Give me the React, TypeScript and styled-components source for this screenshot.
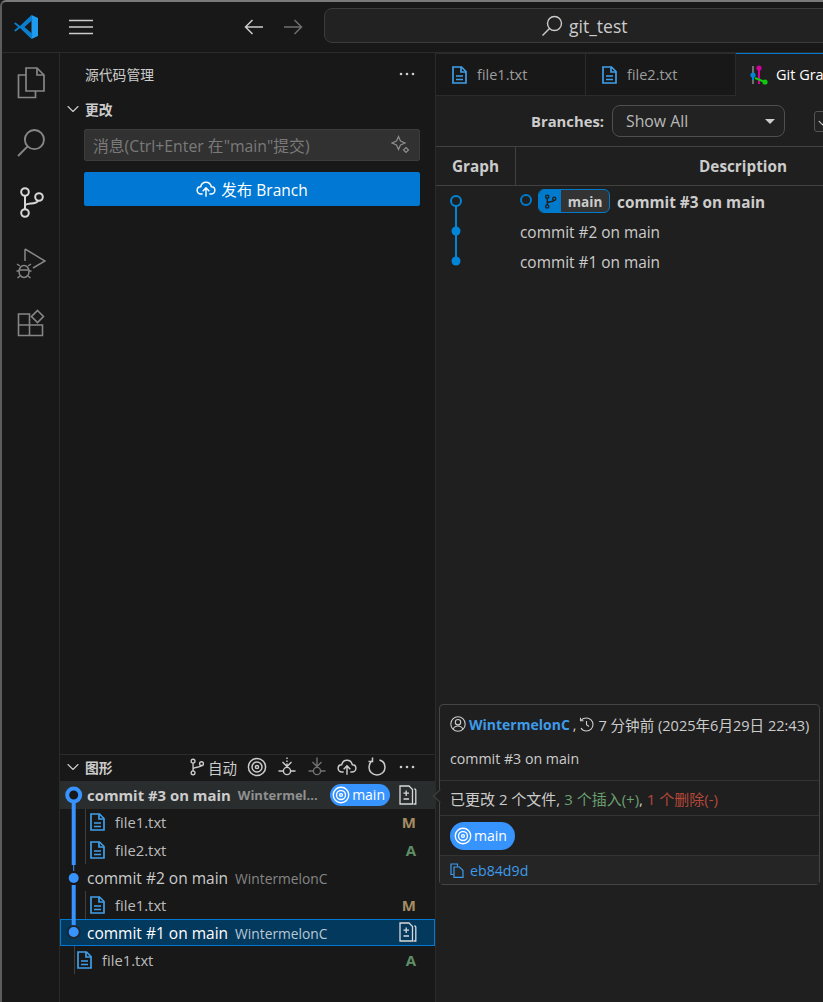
import React from 'react'
import styled, { createGlobalStyle } from 'styled-components'

const FONT = `"Open Sans", "Noto Sans CJK SC", sans-serif`

const GlobalStyle = createGlobalStyle`
  html, body {
    margin: 0;
    padding: 0;
    background: #181818;
    overflow: hidden;
  }
  * {
    box-sizing: border-box;
  }
`

const Window = styled.div`
  position: relative;
  width: 823px;
  height: 1002px;
  display: flex;
  flex-direction: column;
  overflow: hidden;
  background: #181818;
  border-top: 2px solid #7a7a7a;
  border-left: 2px solid #5c5c5c;
  border-top-left-radius: 6px;
  font-family: ${FONT};
  font-size: 14px;
  color: #cccccc;
`

const TitleBar = styled.header`
  height: 51px;
  flex: none;
  display: flex;
  align-items: center;
  border-bottom: 1px solid #2b2b2b;
`

const LogoSlot = styled.div`
  width: 48px;
  flex: none;
  display: flex;
  justify-content: center;
`

const MenuButton = styled.div`
  width: 42px;
  flex: none;
  margin-left: 10px;
  display: flex;
  justify-content: center;
  color: #cccccc;
`

const NavButtons = styled.div`
  flex: none;
  margin-left: 142px;
  margin-right: 21px;
  display: flex;
  gap: 19px;
`

const NavArrow = styled.span<{ $dim?: boolean }>`
  display: flex;
  color: ${({ $dim }) => ($dim ? '#6e6e6e' : '#cccccc')};
`

const SearchBox = styled.div`
  width: 640px;
  height: 35px;
  flex: none;
  align-self: flex-start;
  margin-top: 6px;
  display: flex;
  align-items: center;
  padding-left: 216px;
  gap: 6px;
  background: #222222;
  border: 1px solid #3c3c3c;
  border-radius: 8px 0 0 8px;
  font-size: 17.5px;
  color: #cccccc;
`

const Body = styled.div`
  flex: 1;
  display: flex;
  min-height: 0;
`

const ActivityBar = styled.nav`
  width: 58px;
  flex: none;
  display: flex;
  flex-direction: column;
  align-items: center;
  gap: 28px;
  padding: 14px 0 0;
  border-right: 1px solid #2b2b2b;
`

const ActivityIcon = styled.div<{ $active?: boolean }>`
  width: 32px;
  height: 32px;
  display: flex;
  align-items: center;
  justify-content: center;
  color: ${({ $active }) => ($active ? '#d7d7d7' : '#868686')};
`

const SideBar = styled.aside`
  width: 376px;
  flex: none;
  display: flex;
  flex-direction: column;
  border-right: 1px solid #2b2b2b;
`

const SideTitle = styled.div`
  height: 45px;
  flex: none;
  display: flex;
  align-items: center;
  justify-content: space-between;
  padding: 0 20px 4px 25px;
  font-size: 13.8px;
  color: #cccccc;
`

const Dots = styled.span`
  display: flex;
  color: #cccccc;
`

const SectionHead = styled.div`
  height: 24px;
  flex: none;
  display: flex;
  align-items: center;
  gap: 4px;
  padding: 0 0 2px 5px;
  font-size: 13.8px;
  font-weight: 700;
  color: #cccccc;
`

const CommitInput = styled.div`
  height: 32px;
  margin: 7px 15px 0 24px;
  flex: none;
  display: flex;
  align-items: center;
  justify-content: space-between;
  padding: 0 8px;
  background: #313131;
  border: 1px solid #3c3c3c;
  border-radius: 2px;
  font-size: 15.8px;
  color: #7a7a7a;
  white-space: nowrap;
`

const PublishButton = styled.div`
  height: 34px;
  margin: 11px 15px 0 24px;
  flex: none;
  display: flex;
  align-items: center;
  justify-content: center;
  gap: 5px;
  background: #0078d4;
  border-radius: 2px;
  font-size: 15.5px;
  color: #ffffff;
`

const Spacer = styled.div`
  flex: 1;
`

const GraphPane = styled.section`
  flex: none;
  height: 248px;
  border-top: 1px solid #2b2b2b;
  display: flex;
  flex-direction: column;
`

const GraphHead = styled.div`
  height: 26px;
  flex: none;
  display: flex;
  align-items: center;
  padding: 0 18px 2px 5px;
  font-size: 13.8px;
  font-weight: 700;
`

const GraphHeadTitle = styled.span`
  display: flex;
  align-items: center;
  gap: 4px;
  flex: 1;
`

const GraphTools = styled.div`
  display: flex;
  align-items: center;
  gap: 10px;
  font-weight: 400;
`

const AutoLabel = styled.span`
  display: flex;
  align-items: center;
  gap: 2px;
  font-size: 14.5px;
`

const ToolIcon = styled.span<{ $dim?: boolean }>`
  width: 20px;
  display: flex;
  justify-content: center;
  color: ${({ $dim }) => ($dim ? '#727272' : '#cccccc')};
`

const Tree = styled.div`
  position: relative;
`

const GraphOverlay = styled.svg`
  position: absolute;
  left: 0;
  top: 0;
  pointer-events: none;
`

const CommitRow = styled.div<{ $hover?: boolean; $selected?: boolean }>`
  height: 27.5px;
  display: flex;
  align-items: center;
  padding: 0 18px 0 27px;
  white-space: nowrap;
  background: ${({ $hover, $selected }) =>
    $selected ? '#04395e' : $hover ? '#2a2d2e' : 'transparent'};
  outline: ${({ $selected }) => ($selected ? '1px solid #0078d4' : 'none')};
  outline-offset: -1px;
  color: ${({ $selected }) => ($selected ? '#ffffff' : '#cccccc')};
`

const CommitTitle = styled.span<{ $bold?: boolean }>`
  padding-top: ${({ $bold }) => ($bold ? 0 : 2)}px;
  font-size: ${({ $bold }) => ($bold ? 14.9 : 15.5)}px;
  font-weight: ${({ $bold }) => ($bold ? 700 : 400)};
`

const CommitAuthor = styled.span<{ $selected?: boolean; $bold?: boolean }>`
  margin-left: 7px;
  padding-top: ${({ $bold }) => ($bold ? 0 : 2)}px;
  font-size: ${({ $bold }) => ($bold ? 13 : 13.8)}px;
  font-weight: ${({ $bold }) => ($bold ? 700 : 400)};
  color: ${({ $selected, $bold }) =>
    $selected ? '#b9c8d4' : $bold ? '#909090' : '#858585'};
`

const RowEnd = styled.span`
  margin-left: auto;
  display: flex;
  align-items: center;
  gap: 9px;
  color: #d8d8d8;
`

const RefPill = styled.span<{ $big?: boolean }>`
  display: inline-flex;
  align-items: center;
  gap: 2px;
  height: ${({ $big }) => ($big ? 28 : 22)}px;
  padding: ${({ $big }) => ($big ? '0 8px 0 4px' : '0 5px 0 2px')};
  border-radius: 14px;
  background: #3794ff;
  color: #ffffff;
  font-size: 14px;
`

const FileRow = styled.div<{ $root?: boolean }>`
  height: 27.5px;
  display: flex;
  align-items: center;
  margin-left: ${({ $root }) => ($root ? 14 : 25)}px;
  padding: 0 19px 0 ${({ $root }) => ($root ? 2 : 4)}px;
  border-left: 1px solid #3f3f3f;
  gap: 10px;
  font-size: 14.8px;
  color: #bcbcbc;
`

const FileStatus = styled.span<{ $added?: boolean }>`
  margin-left: auto;
  font-size: 15px;
  font-weight: 700;
  color: ${({ $added }) => ($added ? '#5f8f67' : '#a58c63')};
`

const Editor = styled.main`
  flex: 1;
  min-width: 0;
  display: flex;
  flex-direction: column;
  overflow: hidden;
  background: #1f1f1f;
`

const TabStrip = styled.div`
  height: 43px;
  flex: none;
  display: flex;
  background: #181818;
`

const Tab = styled.div<{ $active?: boolean }>`
  width: 150px;
  flex: none;
  display: flex;
  align-items: center;
  gap: ${({ $active }) => ($active ? 8 : 10)}px;
  padding-left: ${({ $active }) => ($active ? 14 : 16)}px;
  white-space: nowrap;
  font-size: 14.5px;
  border-right: 1px solid #2b2b2b;
  border-top: 1px solid ${({ $active }) => ($active ? '#0078d4' : '#2b2b2b')};
  border-bottom: 1px solid ${({ $active }) => ($active ? '#1f1f1f' : '#2b2b2b')};
  background: ${({ $active }) => ($active ? '#1f1f1f' : '#181818')};
  color: ${({ $active }) => ($active ? '#ffffff' : '#9d9d9d')};
`

const ControlRow = styled.div`
  height: 51px;
  flex: none;
  display: flex;
  align-items: center;
  padding-left: 95px;
  border-bottom: 1px solid #414141;
`

const ControlLabel = styled.span`
  font-size: 14.8px;
  font-weight: 700;
  color: #cccccc;
`

const BranchSelect = styled.div`
  width: 173px;
  height: 32px;
  flex: none;
  margin-left: 8px;
  display: flex;
  align-items: center;
  justify-content: space-between;
  padding: 0 9px 0 13px;
  background: #222222;
  border: 1px solid #4f4f4f;
  border-radius: 8px;
  font-size: 15.8px;
  color: #b9b9b9;
`

const Caret = styled.span`
  width: 0;
  height: 0;
  border-left: 5px solid transparent;
  border-right: 5px solid transparent;
  border-top: 5px solid #cccccc;
`

const Check = styled.span`
  width: 20px;
  height: 21px;
  flex: none;
  margin-left: 29px;
  display: flex;
  align-items: center;
  justify-content: center;
  background: #222222;
  border: 1px solid #555555;
  border-radius: 3px;
  color: #cccccc;
`

const TableHead = styled.div`
  height: 39px;
  flex: none;
  width: 600px;
  display: grid;
  grid-template-columns: 80px 454px;
  border-bottom: 1px solid #414141;
`

const HeadCell = styled.div<{ $first?: boolean }>`
  display: flex;
  align-items: center;
  justify-content: center;
  font-size: 15.3px;
  font-weight: 700;
  color: #cccccc;
  border-right: ${({ $first }) => ($first ? '1px solid #414141' : 'none')};
`

const TableBody = styled.div`
  display: flex;
`

const GraphColumn = styled.div`
  width: 84px;
  flex: none;
`

const RowList = styled.div`
  display: flex;
  flex-direction: column;
`

const TableRow = styled.div<{ $bold?: boolean }>`
  height: 30px;
  display: flex;
  align-items: center;
  padding-top: 2px;
  white-space: nowrap;
  font-size: ${({ $bold }) => ($bold ? 15.35 : 15.4)}px;
  font-weight: ${({ $bold }) => ($bold ? 700 : 400)};
  color: #cccccc;
`

const HeadMark = styled.span`
  width: 12px;
  height: 12px;
  margin: -4px 6px 0 0;
  flex: none;
  border: 2px solid #007acc;
  border-radius: 50%;
`

const RefChip = styled.span`
  height: 24px;
  width: 72px;
  margin: -2px 7px 0 0;
  flex: none;
  display: flex;
  overflow: hidden;
  border: 1px solid #007acc;
  border-radius: 6px;
  background: #333333;
`

const RefChipIcon = styled.span`
  width: 22px;
  display: flex;
  align-items: center;
  justify-content: center;
  background: #007acc;
  color: #1f1f1f;
`

const RefChipName = styled.span`
  flex: 1;
  display: flex;
  align-items: center;
  justify-content: center;
  font-size: 13.6px;
  font-weight: 700;
`

const Popover = styled.div`
  position: absolute;
  left: 437px;
  top: 702px;
  width: 381px;
  display: flex;
  flex-direction: column;
  background: #1f1f1f;
  border: 1px solid #454545;
  border-radius: 4px;
  font-size: 14.2px;
  color: #cccccc;
  white-space: nowrap;

  &::before {
    content: '';
    position: absolute;
    left: -5px;
    top: 86px;
    width: 9px;
    height: 9px;
    background: #1f1f1f;
    border-left: 1px solid #454545;
    border-bottom: 1px solid #454545;
    transform: rotate(45deg);
  }
`

const PopSection = styled.div<{ $height: number; $shaded?: boolean }>`
  height: ${({ $height }) => $height}px;
  padding: 0 10px;
  display: flex;
  align-items: center;
  border-top: 1px solid #333333;
  background: ${({ $shaded }) => ($shaded ? '#252526' : 'transparent')};
`

const PopHeader = styled.div`
  height: 75px;
  padding: 0 10px;
`

const PopMeta = styled.div`
  height: 38px;
  display: flex;
  align-items: center;
  gap: 3px;

  svg {
    flex: none;
  }
`

const PopDate = styled.span`
  flex: none;
  margin-left: 1px;
  font-size: 14.55px;
`

const HistorySlot = styled.span`
  flex: none;
  display: flex;
`

const PopMessage = styled.div`
  margin-top: 6px;
  line-height: 20px;
`

const PopStats = styled.span`
  font-size: 15px;
`

const PopLink = styled.span`
  color: #3d9be9;
`

const AuthorLink = styled(PopLink)`
  flex: none;
  font-size: 14px;
  font-weight: 700;
`

const Added = styled.span`
  color: #6a9f6f;
`

const Removed = styled.span`
  color: #b5483a;
`

const HashLink = styled(PopLink)`
  display: flex;
  align-items: center;
  gap: 6px;
`

type IconProps = { size?: number; stroke?: number; children: React.ReactNode }

const Glyph = ({ size = 16, stroke = 1.2, children }: IconProps) => (
  <svg
    width={size}
    height={size}
    viewBox="0 0 16 16"
    fill="none"
    stroke="currentColor"
    strokeWidth={stroke}
    strokeLinecap="round"
    strokeLinejoin="round"
  >
    {children}
  </svg>
)

const VsCodeLogo = () => (
  <svg width="26" height="26" viewBox="0 0 26 26">
    <path d="M18.5 1 L25 4 V22 L18.5 25 V1Z" fill="#1f9cf0" />
    <path d="M18.5 1 L7 12 L2.6 8.4 L1 9.4 L5.2 13 L1 16.6 L2.6 17.6 L7 14 L18.5 25 L19.5 20 L11.5 13 L19.5 6Z" fill="#0a7fd0" />
  </svg>
)

const Hamburger = () => (
  <svg width="26" height="18" viewBox="0 0 26 18" stroke="currentColor" strokeWidth="1.7">
    <path d="M1 2.5H25M1 9H25M1 15.5H25" />
  </svg>
)

const ArrowLeft = () => (
  <svg width="20" height="16" viewBox="0 0 20 16" fill="none" stroke="currentColor" strokeWidth="1.5">
    <path d="M19 8H1.5M8.5 1L1.5 8L8.5 15" />
  </svg>
)

const ArrowRight = () => (
  <svg width="20" height="16" viewBox="0 0 20 16" fill="none" stroke="currentColor" strokeWidth="1.5">
    <path d="M1 8H18.5M11.5 1L18.5 8L11.5 15" />
  </svg>
)

const SearchGlyph = ({ size = 22 }: { size?: number }) => (
  <svg width={size} height={size} viewBox="0 0 22 22" fill="none" stroke="currentColor" strokeWidth="1.4">
    <circle cx="13.5" cy="8.5" r="7" />
    <path d="M8.5 13.5L1.5 20.5" />
  </svg>
)

const FilesIcon = () => (
  <svg width="28" height="32" viewBox="0 0 28 32" fill="none" stroke="currentColor" strokeWidth="1.7">
    <path d="M9 1H20L27 8V24H9V1Z" />
    <path d="M20 1V8H27" />
    <path d="M9 8H1.5V30.5H18.5V24" />
  </svg>
)

const ScmIcon = () => (
  <svg width="26" height="32" viewBox="0 0 26 32" fill="none" stroke="currentColor" strokeWidth="2">
    <circle cx="7" cy="5" r="3.8" />
    <circle cx="7" cy="26" r="3.8" />
    <circle cx="21" cy="10" r="3.8" />
    <path d="M7 9V22M7 19C7 15 18 18 20 14" />
  </svg>
)

const DebugIcon = () => (
  <svg width="30" height="32" viewBox="0 0 30 32" fill="none" stroke="currentColor" strokeWidth="1.5">
    <path d="M9 2V14M9 2L29 14L17 21" />
    <ellipse cx="8" cy="24.5" rx="5" ry="6" />
    <path d="M3.5 23H12.5M4 19L1 17M12 19L15 17M3 24H0.5M13 24H15.5M4 29L1.5 31M12 29L14.5 31" />
  </svg>
)

const ExtensionsIcon = () => (
  <svg width="28" height="28" viewBox="0 0 28 28" fill="none" stroke="currentColor" strokeWidth="1.6">
    <path d="M1.5 5H12.5V26.5H1.5V5ZM1.5 16H25.5V26.5H12.5" />
    <path d="M20.5 1.5L26.5 7.5L20.5 13.5L14.5 7.5L20.5 1.5Z" />
  </svg>
)

const Chevron = () => (
  <Glyph stroke={1.1}>
    <path d="M3 5.5L8 10.5L13 5.5" />
  </Glyph>
)

const More = () => (
  <svg width="16" height="4" viewBox="0 0 16 4" fill="currentColor">
    <circle cx="2" cy="2" r="1.3" />
    <circle cx="8" cy="2" r="1.3" />
    <circle cx="14" cy="2" r="1.3" />
  </svg>
)

const Sparkle = () => (
  <svg width="20" height="20" viewBox="0 0 20 20" fill="none" stroke="#8d8d8d" strokeWidth="1.2">
    <path d="M7.5 1.5L9.5 6L14 8L9.5 10L7.5 14.5L5.5 10L1 8L5.5 6Z" />
    <path d="M15 12.5L17.5 15L15 17.5L12.5 15Z" />
  </svg>
)

const CloudUpload = ({ size = 18 }: { size?: number }) => (
  <svg width={size} height={size} viewBox="0 0 18 18" fill="none" stroke="currentColor" strokeWidth="1.3">
    <path d="M6 13.5H4.5C2.5 13.5 1 12 1 10.2C1 8.4 2.4 7 4.2 7C4.8 4.6 6.6 3 9 3C11.4 3 13.2 4.6 13.8 7C15.6 7 17 8.4 17 10.2C17 12 15.5 13.5 13.5 13.5H12" />
    <path d="M9 16V8.5M6 11L9 8L12 11" />
  </svg>
)

const Branch = ({ size = 16, stroke = 1.2 }: { size?: number; stroke?: number }) => (
  <Glyph size={size} stroke={stroke}>
    <circle cx="4.5" cy="2.8" r="1.7" />
    <circle cx="4.5" cy="13.2" r="1.7" />
    <circle cx="12" cy="5" r="1.7" />
    <path d="M4.5 4.5V11.5M4.5 10C4.5 7.5 11 9 12 6.7" />
  </Glyph>
)

const Target = ({ size = 20 }: { size?: number }) => (
  <svg width={size} height={size} viewBox="0 0 20 20" fill="none" stroke="currentColor" strokeWidth="1.5">
    <circle cx="10" cy="10" r="8.6" />
    <circle cx="10" cy="10" r="5" />
    <circle cx="10" cy="10" r="1.6" />
  </svg>
)

const Fetch = () => (
  <svg width="20" height="20" viewBox="0 0 20 20" fill="none" stroke="currentColor" strokeWidth="1.4">
    <path d="M10 0.5V2M10 3.5V5M10 6.5V9.5M5.5 5L10 9.5L14.5 5" />
    <circle cx="10" cy="14" r="3.6" />
    <path d="M1.5 14H6.4M13.6 14H18.5" />
  </svg>
)

const Pull = () => (
  <svg width="20" height="20" viewBox="0 0 20 20" fill="none" stroke="currentColor" strokeWidth="1.4">
    <path d="M10 0.5V9.5M5.5 5L10 9.5L14.5 5" />
    <circle cx="10" cy="14" r="3.6" />
    <path d="M1.5 14H6.4M13.6 14H18.5" />
  </svg>
)

const Refresh = () => (
  <svg width="20" height="20" viewBox="0 0 20 20" fill="none" stroke="currentColor" strokeWidth="1.5">
    <path d="M12.5 3C16 4 18 7 18 10.2C18 14.6 14.4 18 10 18C5.6 18 2 14.6 2 10.2C2 7.6 3.2 5.4 5 4" />
    <path d="M5.5 0.5V4.5H1.5" />
  </svg>
)

const FileIcon = () => (
  <svg width="15" height="18" viewBox="0 0 15 18" fill="none" stroke="#3f9ee8" strokeWidth="1.7">
    <path d="M1 1H9.5L14 5.5V17H1V1Z" />
    <path d="M9 1V6H14M4 10H11M4 13.5H11" />
  </svg>
)

const OpenChanges = () => (
  <svg width="18" height="20" viewBox="0 0 18 20" fill="none" stroke="currentColor" strokeWidth="1.3">
    <path d="M1 1H10L13.5 4.5V19H1V1Z" />
    <path d="M15.5 3.5L16.8 5V19H14.5" />
    <path d="M7.2 5.5V11M4.5 8.2H10M4.5 14H10" />
  </svg>
)

const UserRing = () => (
  <svg width="16" height="16" viewBox="0 0 16 16" fill="none" stroke="currentColor" strokeWidth="1.1">
    <circle cx="8" cy="8" r="7.2" />
    <circle cx="8" cy="6.2" r="2.7" />
    <path d="M3.2 13.2C4 10.8 5.8 10 8 10C10.2 10 12 10.8 12.8 13.2" />
  </svg>
)

const History = () => (
  <svg width="15" height="15" viewBox="0 0 15 15" fill="none" stroke="currentColor" strokeWidth="1.1">
    <path d="M2.2 3.2C3.4 1.8 5.2 1 7.5 1C11 1 14 3.9 14 7.5C14 11.1 11 14 7.5 14C5 14 3 12.8 2 11" />
    <path d="M1.5 0.8V3.8H4.5M7.5 4V7.8L10 9.5" />
  </svg>
)

const CopyIcon = () => (
  <svg width="14" height="15" viewBox="0 0 14 15" fill="none" stroke="currentColor" strokeWidth="1.2">
    <path d="M4 4H9.5L13 7.5V14.3H4V4Z" />
    <path d="M3.5 11.5H1V1H7.5V3.5" />
  </svg>
)

const CheckMark = () => (
  <Glyph size={14} stroke={1.4}>
    <path d="M2.5 8.5L6.5 12.5L13.5 4" />
  </Glyph>
)

const GitGraphIcon = () => (
  <svg width="18" height="20" viewBox="0 0 18 20" fill="none" strokeWidth="2">
    <path d="M3 1V19" stroke="#6f6f6f" />
    <circle cx="3" cy="10" r="2.6" fill="#0085d9" stroke="none" />
    <path d="M3 8V15" stroke="#0085d9" />
    <path d="M9 3V19" stroke="#d5009b" />
    <circle cx="9" cy="3" r="2.6" fill="#d5009b" stroke="none" />
    <path d="M5 13L15 17" stroke="#10c810" />
    <circle cx="15" cy="17" r="2.6" fill="#10c810" stroke="none" />
  </svg>
)

// commit dots and the branch line of the graph view
const TreeGraph = () => (
  <GraphOverlay width="40" height="193" viewBox="0 0 40 193">
    <path d="M13.7 14V84" stroke="#3794ff" strokeWidth="4" fill="none" />
    <path d="M13.7 84V90" stroke="#3794ff" strokeWidth="1" fill="none" />
    <path d="M13.7 104V146" stroke="#3794ff" strokeWidth="4" fill="none" />
    <circle cx="13.7" cy="14" r="6.5" fill="#181818" stroke="#3794ff" strokeWidth="4" />
    <circle cx="13.7" cy="97" r="5" fill="#3794ff" />
    <circle cx="13.7" cy="151" r="6" fill="#3794ff" stroke="#1c2733" strokeWidth="2" />
  </GraphOverlay>
)

const TableGraph = () => (
  <svg width="84" height="90" viewBox="0 0 84 90" fill="none">
    <path d="M20 15V75" stroke="#0085d9" strokeWidth="2" />
    <circle cx="20" cy="15" r="5" fill="#1f1f1f" stroke="#0085d9" strokeWidth="2" />
    <circle cx="20" cy="45" r="4.5" fill="#0085d9" />
    <circle cx="20" cy="75" r="4.5" fill="#0085d9" />
  </svg>
)

export default function App() {
  return (
    <>
      <GlobalStyle />
      <Window>
        <TitleBar>
          <LogoSlot>
            <VsCodeLogo />
          </LogoSlot>
          <MenuButton>
            <Hamburger />
          </MenuButton>
          <NavButtons>
            <NavArrow>
              <ArrowLeft />
            </NavArrow>
            <NavArrow $dim>
              <ArrowRight />
            </NavArrow>
          </NavButtons>
          <SearchBox>
            <SearchGlyph />
            git_test
          </SearchBox>
        </TitleBar>
        <Body>
          <ActivityBar>
            <ActivityIcon>
              <FilesIcon />
            </ActivityIcon>
            <ActivityIcon>
              <SearchGlyph size={30} />
            </ActivityIcon>
            <ActivityIcon $active>
              <ScmIcon />
            </ActivityIcon>
            <ActivityIcon>
              <DebugIcon />
            </ActivityIcon>
            <ActivityIcon>
              <ExtensionsIcon />
            </ActivityIcon>
          </ActivityBar>
          <SideBar>
            <SideTitle>
              源代码管理
              <Dots>
                <More />
              </Dots>
            </SideTitle>
            <SectionHead>
              <Chevron />
              更改
            </SectionHead>
            <CommitInput>
              消息(Ctrl+Enter 在"main"提交)
              <Sparkle />
            </CommitInput>
            <PublishButton>
              <CloudUpload size={20} />
              发布 Branch
            </PublishButton>
            <Spacer />
            <GraphPane>
              <GraphHead>
                <GraphHeadTitle>
                  <Chevron />
                  图形
                </GraphHeadTitle>
                <GraphTools>
                  <AutoLabel>
                    <Branch size={18} />
                    自动
                  </AutoLabel>
                  <ToolIcon>
                    <Target />
                  </ToolIcon>
                  <ToolIcon>
                    <Fetch />
                  </ToolIcon>
                  <ToolIcon $dim>
                    <Pull />
                  </ToolIcon>
                  <ToolIcon>
                    <CloudUpload size={20} />
                  </ToolIcon>
                  <ToolIcon>
                    <Refresh />
                  </ToolIcon>
                  <ToolIcon>
                    <More />
                  </ToolIcon>
                </GraphTools>
              </GraphHead>
              <Tree>
                <CommitRow $hover>
                  <CommitTitle $bold>commit #3 on main</CommitTitle>
                  <CommitAuthor $bold>Wintermel...</CommitAuthor>
                  <RowEnd>
                    <RefPill>
                      <Target size={18} />
                      main
                    </RefPill>
                    <OpenChanges />
                  </RowEnd>
                </CommitRow>
                <FileRow>
                  <FileIcon />
                  file1.txt
                  <FileStatus>M</FileStatus>
                </FileRow>
                <FileRow>
                  <FileIcon />
                  file2.txt
                  <FileStatus $added>A</FileStatus>
                </FileRow>
                <CommitRow>
                  <CommitTitle>commit #2 on main</CommitTitle>
                  <CommitAuthor>WintermelonC</CommitAuthor>
                </CommitRow>
                <FileRow>
                  <FileIcon />
                  file1.txt
                  <FileStatus>M</FileStatus>
                </FileRow>
                <CommitRow $selected>
                  <CommitTitle>commit #1 on main</CommitTitle>
                  <CommitAuthor $selected>WintermelonC</CommitAuthor>
                  <RowEnd>
                    <OpenChanges />
                  </RowEnd>
                </CommitRow>
                <FileRow $root>
                  <FileIcon />
                  file1.txt
                  <FileStatus $added>A</FileStatus>
                </FileRow>
                <TreeGraph />
              </Tree>
            </GraphPane>
          </SideBar>
          <Editor>
            <TabStrip>
              <Tab>
                <FileIcon />
                file1.txt
              </Tab>
              <Tab>
                <FileIcon />
                file2.txt
              </Tab>
              <Tab $active>
                <GitGraphIcon />
                Git Graph
              </Tab>
            </TabStrip>
            <ControlRow>
              <ControlLabel>Branches:</ControlLabel>
              <BranchSelect>
                Show All
                <Caret />
              </BranchSelect>
              <Check>
                <CheckMark />
              </Check>
            </ControlRow>
            <TableHead>
              <HeadCell $first>Graph</HeadCell>
              <HeadCell>Description</HeadCell>
            </TableHead>
            <TableBody>
              <GraphColumn>
                <TableGraph />
              </GraphColumn>
              <RowList>
                <TableRow $bold>
                  <HeadMark />
                  <RefChip>
                    <RefChipIcon>
                      <Branch size={15} stroke={1.4} />
                    </RefChipIcon>
                    <RefChipName>main</RefChipName>
                  </RefChip>
                  commit #3 on main
                </TableRow>
                <TableRow>commit #2 on main</TableRow>
                <TableRow>commit #1 on main</TableRow>
              </RowList>
            </TableBody>
          </Editor>
        </Body>
        <Popover>
          <PopHeader>
            <PopMeta>
              <UserRing />
              <AuthorLink>WintermelonC</AuthorLink>,
              <HistorySlot>
                <History />
              </HistorySlot>
              <PopDate>7 分钟前 (2025年6月29日 22:43)</PopDate>
            </PopMeta>
            <PopMessage>commit #3 on main</PopMessage>
          </PopHeader>
          <PopSection $height={35}>
            <PopStats>
              已更改 2 个文件, <Added>3 个插入(+)</Added>, <Removed>1 个删除(-)</Removed>
            </PopStats>
          </PopSection>
          <PopSection $height={40}>
            <RefPill $big>
              <Target size={18} />
              main
            </RefPill>
          </PopSection>
          <PopSection $height={29} $shaded>
            <HashLink>
              <CopyIcon />
              eb84d9d
            </HashLink>
          </PopSection>
        </Popover>
      </Window>
    </>
  )
}
